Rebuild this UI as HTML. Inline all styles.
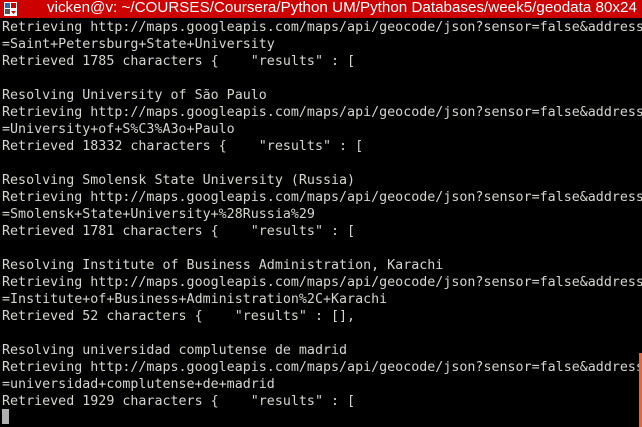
<!DOCTYPE html>
<html><head><meta charset="utf-8"><style>
html,body{margin:0;padding:0;background:#000;width:642px;height:427px;overflow:hidden;position:relative}
#title{position:absolute;left:0;top:0;width:642px;height:18px;background:#cc0000;color:#fff;font:15.2px "Liberation Sans","DejaVu Sans",sans-serif;line-height:18px;white-space:nowrap}
#title span{position:absolute;left:47px;top:-1px}
#term{position:absolute;left:2px;top:19px;margin:0;font:13.33px "DejaVu Sans Mono","Liberation Mono",monospace;line-height:17px;color:#d3d7cf;white-space:pre}
#cur{position:absolute;left:2px;top:409px;width:7px;height:15px;background:#b0b0b0}
#sb{position:absolute;left:639px;top:353px;width:3px;height:74px;background:#e9643a}
</style></head><body>
<div id="title">
<svg style="position:absolute;left:4px;top:2px" width="13" height="14" viewBox="0 0 13 14"><rect x="0" y="0" width="13" height="14" fill="#fff"/><rect x="1" y="1" width="5" height="5" fill="#3465a4"/><rect x="7" y="1" width="5" height="5" fill="#cc0000"/><rect x="1" y="7" width="5" height="5" fill="#555"/><path d="M7 9h5l-2.5 3z" fill="#cc0000"/></svg>
<span>vicken@v: ~/COURSES/Coursera/Python UM/Python Databases/week5/geodata 80x24</span></div>
<pre id="term">Retrieving http://maps.googleapis.com/maps/api/geocode/json?sensor=false&amp;address
=Saint+Petersburg+State+University
Retrieved 1785 characters {    "results" : [

Resolving University of São Paulo
Retrieving http://maps.googleapis.com/maps/api/geocode/json?sensor=false&amp;address
=University+of+S%C3%A3o+Paulo
Retrieved 18332 characters {    "results" : [

Resolving Smolensk State University (Russia)
Retrieving http://maps.googleapis.com/maps/api/geocode/json?sensor=false&amp;address
=Smolensk+State+University+%28Russia%29
Retrieved 1781 characters {    "results" : [

Resolving Institute of Business Administration, Karachi
Retrieving http://maps.googleapis.com/maps/api/geocode/json?sensor=false&amp;address
=Institute+of+Business+Administration%2C+Karachi
Retrieved 52 characters {    "results" : [],

Resolving universidad complutense de madrid
Retrieving http://maps.googleapis.com/maps/api/geocode/json?sensor=false&amp;address
=universidad+complutense+de+madrid
Retrieved 1929 characters {    "results" : [</pre>
<div id="cur"></div>
<div id="sb"></div>
</body></html>
